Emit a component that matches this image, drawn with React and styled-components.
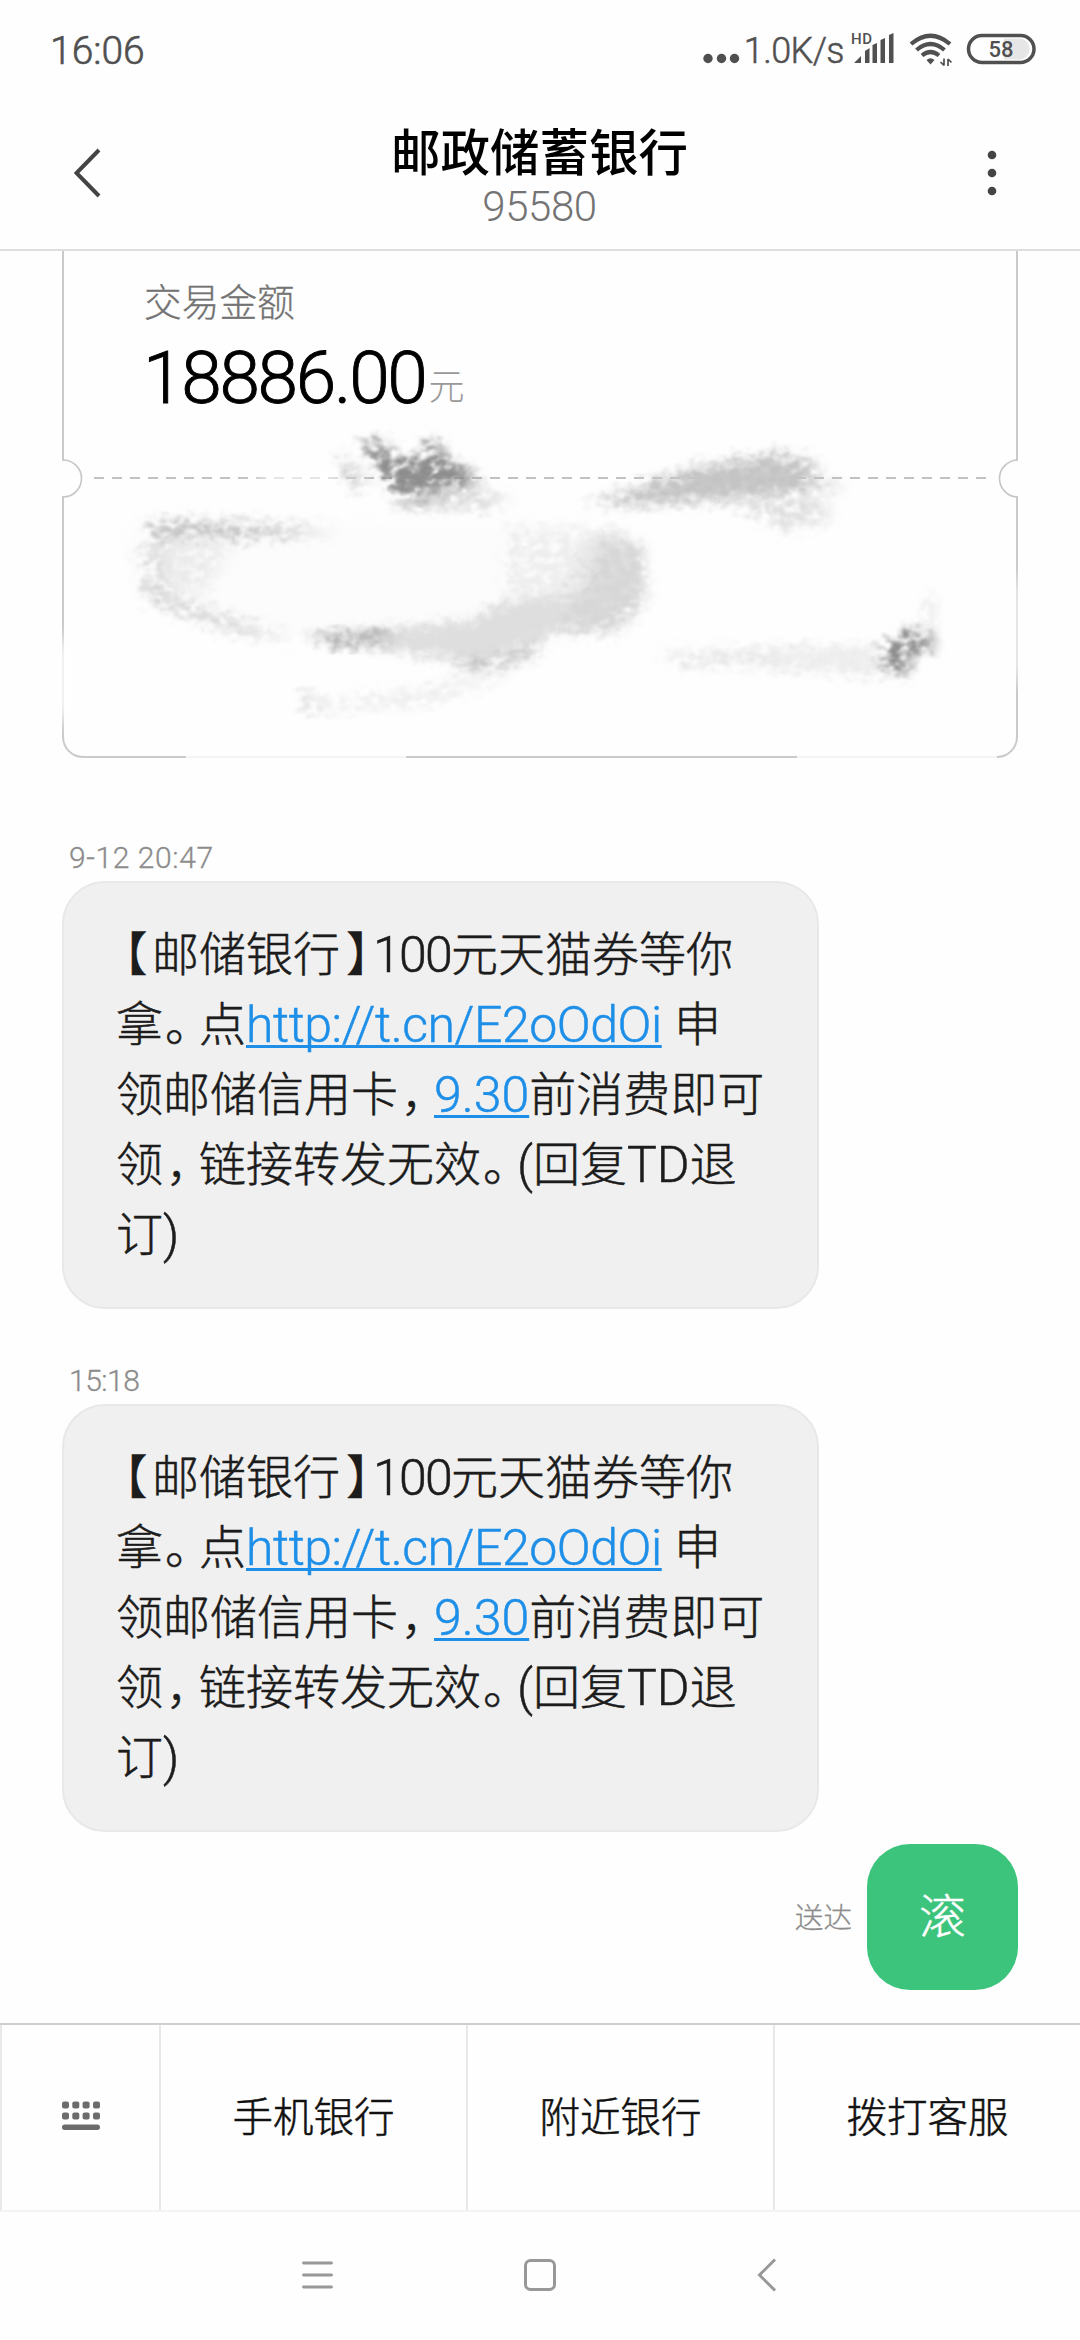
import React from 'react';
import styled, { createGlobalStyle } from 'styled-components';

const GlobalStyle = createGlobalStyle`
    * { box-sizing: border-box; }
    body {
        margin: 0;
        background: #fefefe;
        font-family: Roboto, "Noto Sans CJK SC", sans-serif;
        font-weight: 400;
        color: #000;
    }
`
const Screen = styled.div`
    width: 1080px;
    height: 2340px;
    display: flex;
    flex-direction: column;
    overflow: hidden;
    background: #fefefe;
`
const StatusBar = styled.div`
    height: 100px;
    padding: 1px 44px 0 50px;
    display: flex;
    align-items: center;
    color: #505050;
`
const Clock = styled.span`
    flex: 1;
    font-size: 39px;
    font-weight: 300;
    -webkit-text-stroke: 0.6px #505050;
`
const Speed = styled.span`
    font-size: 36px;
    letter-spacing: -0.6px;
    font-weight: 300;
    margin: 0 6px 0 3px;
    -webkit-text-stroke: 0.5px #505050;
`
const Header = styled.div`
    height: 151px;
    border-bottom: 2px solid #dedede;
    padding: 0 75px 0 74px;
    display: grid;
    grid-template-columns: 150px 1fr 150px;
    align-items: center;
    & > svg { margin-bottom: 3px; }
    & > svg:last-child { justify-self: end; }
`
const Titles = styled.div`
    display: flex;
    flex-direction: column;
    align-items: center;
`
const Title = styled.div`
    font-size: 49.5px;
    line-height: 60px;
    font-weight: 500;
`
const Subtitle = styled.div`
    font-size: 42px;
    line-height: 42px;
    font-weight: 300;
    letter-spacing: -0.4px;
    padding-top: 2px;
    margin-bottom: -2px;
    color: #737373;
`
const Thread = styled.div`
    height: 1772px;
    padding: 0 62px;
    display: flex;
    flex-direction: column;
`
const Ticket = styled.div`
    position: relative;
    height: 507px;
    padding: 34px 0 0 80px;
    border: 2px solid #cacaca;
    border-top: 0;
    border-radius: 0 0 21px 21px;
    margin-bottom: 82px;
`
const TicketLabel = styled.div`
    font-size: 37.7px;
    line-height: 36px;
    font-weight: 300;
    color: #737373;
    -webkit-text-stroke: 0.3px #737373;
`
const Amount = styled.div`
    display: flex;
    align-items: baseline;
    font-size: 73px;
    line-height: 80px;
    letter-spacing: -2.3px;
    font-weight: 300;
    margin: 17px 0 0 -1px;
    -webkit-text-stroke: 0.9px #000;
`
const Unit = styled.span`
    font-size: 36px;
    color: #999;
    letter-spacing: 0;
    margin-left: 3px;
    transform: translateY(-3px);
    -webkit-text-stroke: 0;
`
const Overlay = styled.svg`
    position: absolute;
    left: -3px;
    top: 0;
`
const Stamp = styled.div`
    height: 36px;
    line-height: 36px;
    padding-left: 7px;
    margin-bottom: 5px;
    font-size: 30px;
    font-weight: 300;
    letter-spacing: ${p => p.$gap};
    color: #8c8c8c;
    -webkit-text-stroke: 0.3px #8c8c8c;
`
const Bubble = styled.div`
    width: 757px;
    height: 428px;
    padding: 37px 0 0 52px;
    background: #f0f0f0;
    border: 2px solid #e8e8e8;
    border-radius: 43px;
    margin-bottom: ${p => p.$last ? '12px' : '54px'};
    font-weight: 300;
    color: #1c1c1c;
    -webkit-text-stroke: 0.5px currentColor;
`
const Line = styled.div`
    height: 70px;
    line-height: 70px;
    font-size: 47px;
    white-space: nowrap;
    display: flex;
`
// full-width punctuation set on its half-width form
const Mark = styled.span`
    width: 36px;
    padding-left: ${p => p.$shift || '0'};
    font-feature-settings: "halt";
`
const Latin = styled.span`
    font-size: 50px;
    letter-spacing: ${p => p.$gap || '0'};
`
const Hundred = styled(Latin)`
    margin-left: -3px;
    letter-spacing: -1.7px;
`
const Link = styled(Latin)`
    color: #1e8fe8;
    text-decoration: underline;
    text-decoration-thickness: 2.5px;
    text-underline-offset: 3px;
    text-decoration-skip-ink: none;
`
const Outgoing = styled.div`
    display: flex;
    justify-content: flex-end;
    align-items: center;
    gap: 15px;
    font-weight: 300;
`
const Delivered = styled.span`
    font-size: 28.6px;
    color: #8c8c8c;
    padding-bottom: 3px;
    -webkit-text-stroke: 0.3px #8c8c8c;
`
const GreenBubble = styled.div`
    width: 151px;
    height: 146px;
    padding-bottom: 9px;
    border-radius: 43px;
    background: #3cc47c;
    color: #fff;
    font-size: 47px;
    display: flex;
    align-items: center;
    justify-content: center;
    -webkit-text-stroke: 0.5px #fff;
`
const MenuBar = styled.div`
    height: 189px;
    display: grid;
    grid-template-columns: 159px 307px 307px 307px;
    border-top: 2px solid #cfcfcf;
    border-bottom: 2px solid #f3f3f3;
`
const MenuItem = styled.div`
    display: flex;
    align-items: center;
    justify-content: center;
    padding-bottom: ${p => p.$icon ? '3px' : '7px'};
    border-left: 2px solid #e8e8e8;
    font-size: 40.5px;
    font-weight: 300;
    color: #111;
    -webkit-text-stroke: 0.5px #111;
`
const NavBar = styled.div`
    flex: 1;
    display: flex;
    align-items: center;
    padding: 0 303px 3px 302px;
    justify-content: space-between;
`

const StatusIcons = () => {
    return (
        <svg width="186" height="46" viewBox="850 27 186 46" fill="#505050">
            <text x="851" y="43" fontSize="15" fontWeight="500" letterSpacing="0.5">HD</text>
            <path d="M854 62 L861 55 V62Z M865 62V50l4.500-3V62Z M872.500 62V44l4.500-2V62Z M880.500 62V39l4.500-2V62Z M889 62V34l4.500-2V62Z"/>
            <g fill="none" stroke="#505050" strokeWidth="4.200">
                <path d="M911 43 Q930.500 26.500 950 43"/>
                <path d="M916.500 49 Q930.500 37 944.500 49"/>
                <path d="M922 54.500 Q930.500 47.500 939 54.500"/>
            </g>
            <path d="M926.500 59 Q930.500 55.500 934.500 59 L930.500 63.500Z"/>
            <path d="M944 57.500v7M944 64.500l-3.500-3.500M948 65v-7M948 58l3.500 3.500" stroke="#505050" strokeWidth="1.700" fill="none"/>
            <path d="M1004 37.500h15a10.500 10.500 0 0 1 0 21h-15Z" fill="#e6e6e6"/>
            <rect x="968.500" y="34.500" width="65.500" height="27" rx="13.500" fill="none" stroke="#505050" strokeWidth="3.500"/>
            <text x="1001" y="56" fontSize="22" fontWeight="500" textAnchor="middle">58</text>
        </svg>
    );
};

// side notches, perforation line and the eraser smudges over the ticket
const TicketMarks = () => {
    return (
        <Overlay width="960" height="508" viewBox="61 251 960 508">
            <defs>
                <filter id="grain" x="-20%" y="-40%" width="140%" height="180%" colorInterpolationFilters="sRGB">
                    <feTurbulence type="fractalNoise" baseFrequency="0.1 0.14" numOctaves="4" seed="4" result="n"/>
                    <feGaussianBlur in="SourceGraphic" stdDeviation="6" result="b"/>
                    <feDisplacementMap in="b" in2="n" scale="24" xChannelSelector="R" yChannelSelector="G" result="d"/>
                    <feColorMatrix in="n" type="matrix" values="0 0 0 0 0  0 0 0 0 0  0 0 0 0 0  2.6 0 0 0 -0.55" result="m"/>
                    <feComposite in="d" in2="m" operator="in" result="c"/>
                    <feGaussianBlur in="c" stdDeviation="1.3"/>
                </filter>
                <filter id="soft" x="-20%" y="-40%" width="140%" height="180%" colorInterpolationFilters="sRGB">
                    <feTurbulence type="fractalNoise" baseFrequency="0.09" numOctaves="3" seed="9" result="n"/>
                    <feGaussianBlur in="SourceGraphic" stdDeviation="6" result="b"/>
                    <feDisplacementMap in="b" in2="n" scale="18" xChannelSelector="R" yChannelSelector="G"/>
                </filter>
                <filter id="fade" x="-50%" y="-50%" width="200%" height="200%">
                    <feGaussianBlur stdDeviation="9"/>
                </filter>
            </defs>
            <g fill="#fefefe" stroke="#c6c6c6" strokeWidth="1.600">
                <path d="M63 460 A18.500 18.500 0 0 1 63 497"/>
                <path d="M1018 460 A18.500 18.500 0 0 0 1018 497"/>
            </g>
            <path d="M60 461h4.500v35h-4.500zM1016.500 461h5v35h-5z" fill="#fefefe"/>
            <path d="M94 478H986" stroke="#c2c2c2" strokeWidth="2" strokeDasharray="10 8"/>
            <g fill="#fefefe" filter="url(#fade)">
                <rect x="52" y="640" width="20" height="80"/>
                <rect x="1010" y="580" width="20" height="100" opacity="0.7"/>
                <rect x="260" y="468" width="80" height="20" opacity="0.8"/>
            </g>
            <path d="M186 753h220v5h-220zM797 753h200v5h-200z" fill="#fefefe" opacity="0.8"/>
            <path d="M125 532 Q300 515 500 525 Q550 560 470 620 Q370 640 240 625 L140 595Z" fill="#fcfcfc" filter="url(#soft)"/>
            <path d="M310 634 Q420 628 475 618 Q510 594 560 588 Q572 545 590 536 L636 543 L640 585 L617 622 L560 632 L535 645 L480 664 Q400 653 310 637Z" fill="#dedede" filter="url(#soft)"/>
            <path d="M510 525 L630 530 L580 600 L505 595Z" fill="#eeeeee" filter="url(#grain)"/>
            <path d="M600 536 L645 544 L648 600 L620 632 L560 632 L590 580Z" fill="#d6d6d6" filter="url(#grain)"/>
            <path d="M145 522 L180 520 L250 523 L340 532 L250 538 L185 540 L165 553Z" fill="#c0c0c0" filter="url(#grain)"/>
            <path d="M132 548 L178 556 L172 588 L190 602 L250 624 L300 640 L240 634 L160 606 L138 588 L158 575Z" fill="#d4d4d4" filter="url(#grain)"/>
            <path d="M165 535 L235 545 L205 595 L165 592Z" fill="#ebebeb" filter="url(#grain)"/>
            <path d="M305 634 L390 631 L395 641 L340 648Z" fill="#a8a8a8" filter="url(#grain)"/>
            <path d="M450 661 L490 662 L540 646 L538 654 L485 670 L460 668Z" fill="#a4a4a4" filter="url(#grain)"/>
            <path d="M362 444 L382 440 L404 460 L426 458 L422 440 L440 444 L456 464 L485 484 L460 487 L440 498 L416 505 L392 487 L376 462Z" fill="#8a8a8a" filter="url(#grain)"/>
            <path d="M388 468 L455 464 L472 480 L422 498 L392 484Z" fill="#8e8e8e" filter="url(#grain)"/>
            <path d="M336 452 L352 462 L372 486 L350 488Z" fill="#cecece" filter="url(#grain)"/>
            <path d="M460 485 L515 498 L485 510 L390 508 L400 498Z" fill="#dadada" filter="url(#grain)"/>
            <path d="M610 498 L650 489 L690 473 L745 465 L790 464 L800 483 L750 493 L660 499Z" fill="#c8c8c8" filter="url(#soft)"/>
            <path d="M582 504 L640 487 L700 466 L780 452 L822 462 L812 478 L848 486 L790 496 L650 505Z" fill="#c4c4c4" filter="url(#grain)"/>
            <path d="M725 498 L820 497 L835 518 L785 530 L755 515Z" fill="#dedede" filter="url(#grain)"/>
            <path d="M298 692 L312 712 L330 708 L318 700Z" fill="#d0d0d0" filter="url(#grain)"/>
            <path d="M305 698 L310 710 L420 706 L520 674 L480 678 L400 692 L325 702Z" fill="#ebebeb" filter="url(#grain)"/>
            <path d="M660 652 L770 648 L880 648 L900 665 L880 676 L770 668 L680 666Z" fill="#e6e6e6" filter="url(#grain)"/>
            <path d="M770 652 L875 650 L885 668 L780 664Z" fill="#efefef" filter="url(#soft)"/>
            <path d="M885 645 L905 632 L930 630 L938 648 L915 655 L908 676 L895 674 L882 660Z" fill="#8e8e8e" filter="url(#grain)"/>
            <path d="M925 595 L940 600 L935 630 L920 632Z" fill="#ebebeb" filter="url(#grain)"/>
        </Overlay>
    );
};

const BankMessage = ({ last }) => {
    return (
        <Bubble $last={last}>
            <Line><Mark $shift="8px">【</Mark>邮储银行<Mark $shift="6px">】</Mark><Hundred>100</Hundred>元天猫券等你</Line>
            <Line>拿<Mark $shift="2px">。</Mark>点<Link $gap="-0.45px">http://t.cn/E2oOdOi</Link><Latin>&nbsp;</Latin>申</Line>
            <Line>领邮储信用卡<Mark $shift="3px">，</Mark><Link>9.30</Link>前消费即可</Line>
            <Line>领<Mark $shift="3px">，</Mark>链接转发无效<Mark $shift="2px">。</Mark><Latin>(</Latin>回复<Latin>TD</Latin>退</Line>
            <Line>订<Latin>)</Latin></Line>
        </Bubble>
    );
};

const App = () => {
    return (
        <>
            <GlobalStyle/>
            <Screen>
                <StatusBar>
                    <Clock>16:06</Clock>
                    <svg width="38" height="46" fill="#505050">
                        <circle cx="5" cy="30.500" r="4.700"/>
                        <circle cx="18.500" cy="30.500" r="4.700"/>
                        <circle cx="31.500" cy="30.500" r="4.700"/>
                    </svg>
                    <Speed>1.0K/s</Speed>
                    <StatusIcons/>
                </StatusBar>
                <Header>
                    <svg width="28" height="50" fill="none" stroke="#444" strokeWidth="4">
                        <path d="M25 2 L2.500 25 L25 48"/>
                    </svg>
                    <Titles>
                        <Title>邮政储蓄银行</Title>
                        <Subtitle>95580</Subtitle>
                    </Titles>
                    <svg width="18" height="46" fill="#444">
                        <circle cx="5" cy="5" r="4.300"/>
                        <circle cx="5" cy="23" r="4.300"/>
                        <circle cx="5" cy="41" r="4.300"/>
                    </svg>
                </Header>
                <Thread>
                    <Ticket>
                        <TicketLabel>交易金额</TicketLabel>
                        <Amount>18886.00<Unit>元</Unit></Amount>
                        <TicketMarks/>
                    </Ticket>
                    <Stamp $gap="0.6px">9-12 20:47</Stamp>
                    <BankMessage/>
                    <Stamp $gap="-0.5px">15:18</Stamp>
                    <BankMessage last/>
                    <Outgoing>
                        <Delivered>送达</Delivered>
                        <GreenBubble>滚</GreenBubble>
                    </Outgoing>
                </Thread>
                <MenuBar>
                    <MenuItem $icon>
                        <svg width="38" height="30" fill="#6c6c6c">
                            {[0, 10.300, 20.600, 31].map(x => (
                                <React.Fragment key={x}>
                                    <rect x={x} y="0.500" width="7" height="7" rx="2"/>
                                    <rect x={x} y="11.500" width="7" height="7" rx="2"/>
                                </React.Fragment>
                            ))}
                            <rect x="0" y="23.500" width="38" height="5.500" rx="2.700"/>
                        </svg>
                    </MenuItem>
                    <MenuItem>手机银行</MenuItem>
                    <MenuItem>附近银行</MenuItem>
                    <MenuItem>拨打客服</MenuItem>
                </MenuBar>
                <NavBar>
                    <svg width="31" height="34" stroke="#989898" strokeWidth="2.800" strokeLinecap="round">
                        <path d="M1.500 5H29.500M1.500 17H29.500M1.500 29H29.500"/>
                    </svg>
                    <svg width="42" height="34" fill="none" stroke="#989898" strokeWidth="3">
                        <rect x="1.500" y="2.500" width="29" height="29" rx="5"/>
                    </svg>
                    <svg width="20" height="34" fill="none" stroke="#989898" strokeWidth="3">
                        <path d="M18 1.500 L2.500 17 L18 32.500"/>
                    </svg>
                </NavBar>
            </Screen>
        </>
    );
};

export default App;
